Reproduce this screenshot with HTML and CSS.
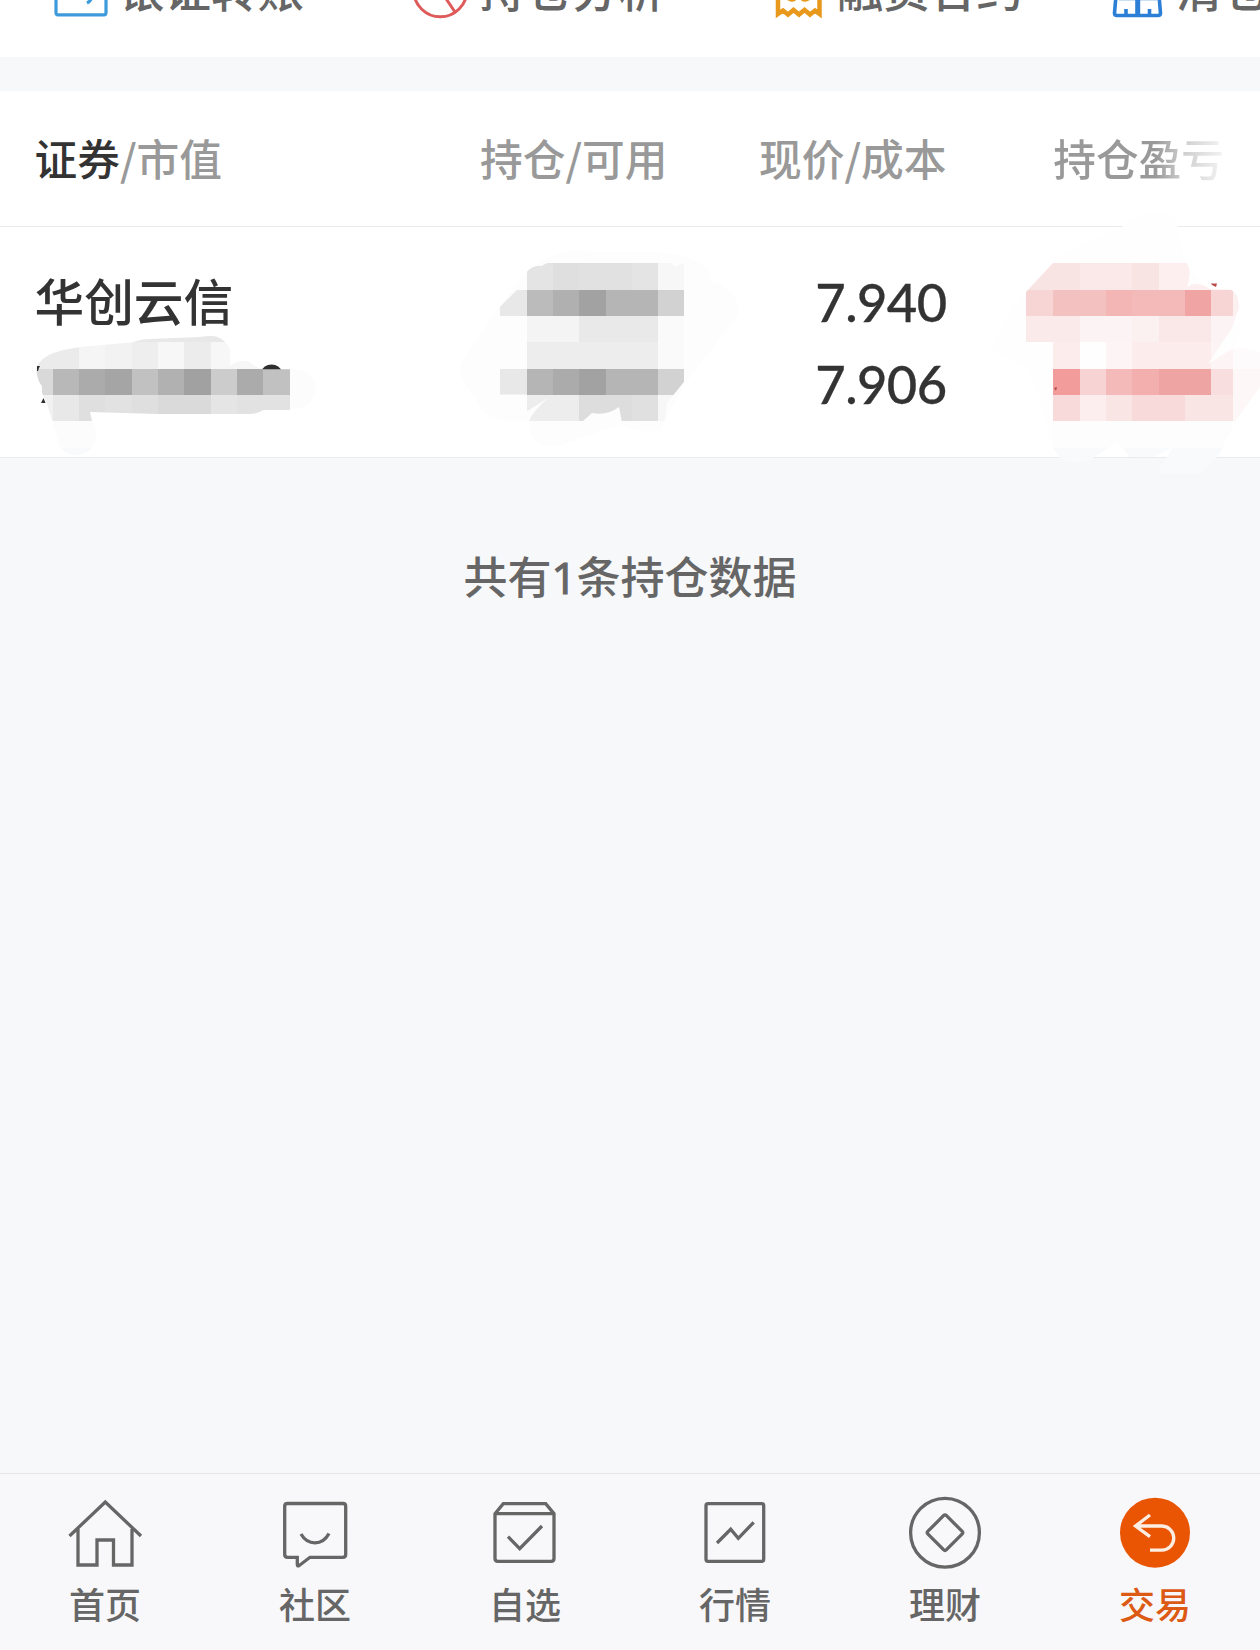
FILE: index.html
```
<!DOCTYPE html>
<html lang="zh-CN">
  <head>
    <meta charset="utf-8">
    <title>持仓</title>
    <meta name="viewport" content="width=device-width">
    <link rel="stylesheet" href="styles.css">
  </head>
  <body>
    <div class="page">
      <!-- shortcuts, scrolled half out of view -->
      <div class="shortcuts">
        <a class="shortcut">
          <svg class="shortcut-icon" viewBox="-3 0 54 54" fill="none" stroke="#3d9bdc" stroke-width="3.200">
            <rect x="-1" y="4" width="50" height="46.8" rx="2"/>
            <path d="M14 27h21l-8 -8M35 33q-1 4 -5 6"/>
          </svg>
          <span>银证转账</span>
        </a>
        <a class="shortcut">
          <svg class="shortcut-icon" viewBox="2 0 54 54" fill="none" stroke="#df5a5a" stroke-width="3">
            <circle cx="27.3" cy="26.2" r="26.6"/>
            <path d="M27.3 -0.4V26.2L42 48"/>
          </svg>
          <span>持仓分析</span>
        </a>
        <a class="shortcut">
          <svg class="shortcut-icon" viewBox="1 0 54 54" fill="none" stroke="#e8991c" stroke-width="4.500">
            <path d="M6 50V4h41.500v46l-4.500 -3.500 -5 4 -5.500 -4.500 -5.500 4.500 -5.500 -4.500 -5.500 4.500 -5 -4z"/>
            <path d="M15 33.500q4 4 8 1.500M38 33.500q-4 4 -8 1.500" stroke-width="3.500"/>
          </svg>
          <span>融资合约</span>
        </a>
        <a class="shortcut">
          <svg class="shortcut-icon" viewBox="1 0 54 54" fill="none" stroke="#2b7fd6" stroke-width="3.600">
            <path d="M6 20L3.500 49q0 2.500 2.500 2.500h41q2.500 0 2.500 -2.500L47 20"/>
            <path d="M8 34.500h38M15 45v6M38.500 45v6"/>
            <path d="M26.700 34v17" stroke-width="5"/>
          </svg>
          <span>清仓股票</span>
        </a>
      </div>

      <div class="holdings">
        <div class="row head">
          <div class="c1"><b>证券</b>/市值</div>
          <div class="c2">持仓/可用</div>
          <div class="c3">现价/成本</div>
          <div class="c4"><span class="fade">持仓盈亏</span></div>
        </div>
        <div class="row stock">
          <div class="c1 name">华创云信</div>
          <div class="c2"></div>
          <div class="c3 price">
            <div>7.940</div>
            <div>7.906</div>
          </div>
          <div class="c4"></div>

          <!-- private values are covered with mosaic, one unit = one tile -->
          <svg class="mosaic" viewBox="0 200 1260 290">
            <defs>
              <clipPath id="m1"><path d="M36.700 373Q36 365 40 362Q44 357 53 353Q66 349 80 347L133 342.300Q142 339 150 339L200 337Q206 335.500 212 336Q220 336.500 225 342Q230 347 230 353L230 366Q236 361 243 361Q250 361 257 367L263 369.300H296Q315 372 315 388Q314 406 298 408L289 410H263Q258 414 250 414H157L90 412L92 421Q96 426 96 435Q95 455 75 455Q65 454 60 447L52 420L46.700 403L42 393V386Q38 382 36.700 373Z"/></clipPath>
              <clipPath id="m2"><path d="M500 306.700L518 289Q523 282 526 272.700Q532 265 542 265.700L547 263H672L675 267L684 263V381.700L667 403Q666 415 664 421H621.700L619 407Q607 416 592 413L583 421H529Q533 411 548 398L526 412V394.500H500Z"/></clipPath>
              <clipPath id="m3"><path d="M1026 292L1053 263H1187Q1192 272 1187 287Q1197 280 1210 289H1227Q1239 290 1239 308L1232 328L1208 364L1227 352Q1240 344 1260 352V387L1235 422L1220 453L1202 473H1157L1173 447L1153 457H1130L1117 442L1093 458Q1075 468 1060 458L1052 447V342H1026Z"/></clipPath>
            </defs>
            <ellipse fill="#2f2f2f" cx="271.500" cy="371" rx="9.500" ry="6.500"/>
            <g clip-path="url(#m1)"><g transform="scale(26.330)" shape-rendering="crispEdges">
              <path fill="#e8e8e8" d="M5 12h4v1h-4z"/>
              <path fill="#ebebeb" d="M1 13h2v1h-2z"/>
              <path fill="#f5f5f5" d="M3 13h1v1h-1z"/>
              <path fill="#f2f2f2" d="M4 13h1v1h-1z"/>
              <path fill="#eeeeee" d="M5 13h1v1h-1z"/>
              <path fill="#f7f7f7" d="M6 13h1v1h-1zM8 13h3v1h-3z"/>
              <path fill="#ececec" d="M7 13h1v1h-1z"/>
              <path fill="#d9d9d9" d="M1 14h1v1h-1z"/>
              <path fill="#b8b8b8" d="M2 14h1v1h-1z"/>
              <path fill="#ababab" d="M3 14h1v1h-1zM9 14h1v1h-1z"/>
              <path fill="#a5a5a5" d="M4 14h1v1h-1z"/>
              <path fill="#c1c1c1" d="M5 14h1v1h-1zM10 14h1v1h-1z"/>
              <path fill="#b1b1b1" d="M6 14h1v1h-1z"/>
              <path fill="#a1a1a1" d="M7 14h1v1h-1z"/>
              <path fill="#cccccc" d="M8 14h1v1h-1z"/>
              <path fill="#fcfcfc" d="M11 14h1v2h-1zM2 16h2v1h-2z"/>
              <path fill="#f1f1f1" d="M1 15h1v1h-1z"/>
              <path fill="#e8e8e8" d="M2 15h1v1h-1z"/>
              <path fill="#dfdfdf" d="M3 15h1v1h-1zM5 15h1v1h-1z"/>
              <path fill="#e2e2e2" d="M4 15h1v1h-1zM9 15h2v1h-2z"/>
              <path fill="#dadada" d="M6 15h2v1h-2z"/>
              <path fill="#e5e5e5" d="M8 15h1v1h-1z"/>
              <path fill="#f9fafc" d="M2 17h2v1h-2z"/>
            </g></g>
            <path fill="#2f2f2f" d="M37 366h3l-1 2 -1 3h-1zM41 403l2.500 -5 2 5z"/>

            <path fill="#fdfdfd" d="M460 365L500 306L526 272Q560 245 590 252L650 252Q710 255 712 282Q740 290 738 315L684 385L660 430Q640 435 620 424L560 446Q530 450 528 420Q480 425 475 395Q460 385 460 365Z"/>
            <g clip-path="url(#m2)"><g transform="scale(26.330)" shape-rendering="crispEdges">
              <path fill="#e4e4e4" d="M20 10h1v1h-1zM24 10h1v1h-1z"/>
              <path fill="#dfdfdf" d="M21 10h1v1h-1z"/>
              <path fill="#e1e1e1" d="M22 10h2v1h-2z"/>
              <path fill="#f7f7f7" d="M25 10h1v1h-1zM25 15h1v1h-1z"/>
              <path fill="#e8e8e8" d="M19 11h1v1h-1zM19 14h1v1h-1z"/>
              <path fill="#bbbbbb" d="M20 11h1v1h-1z"/>
              <path fill="#b0b0b0" d="M21 11h1v1h-1z"/>
              <path fill="#a2a2a2" d="M22 11h1v1h-1zM22 14h1v1h-1z"/>
              <path fill="#b5b5b5" d="M23 11h2v1h-2zM23 14h2v1h-2zM20 14h1v1h-1z"/>
              <path fill="#d2d2d2" d="M25 11h1v1h-1zM25 14h1v1h-1z"/>
              <path fill="#f4f4f4" d="M20 12h2v1h-2z"/>
              <path fill="#e9e9e9" d="M22 12h3v1h-3z"/>
              <path fill="#fafafa" d="M25 12h1v2h-1z"/>
              <path fill="#ededed" d="M20 13h5v1h-5z"/>
              <path fill="#ababab" d="M21 14h1v1h-1z"/>
              <path fill="#ededed" d="M20 15h2v1h-2z"/>
              <path fill="#dddddd" d="M22 15h2v1h-2z"/>
              <path fill="#e0e0e0" d="M24 15h1v1h-1z"/>
            </g></g>

            <path fill="#fefefe" d="M992 350Q1000 320 1026 290L1060 255 1122 227Q1140 212 1160 213Q1178 214 1179 235L1185 263 1240 330 1210 440 1052 445 1040 400 1030 370Z"/>
            <g clip-path="url(#m3)"><g transform="scale(26.330)" shape-rendering="crispEdges">
              <path fill="#f9e4e4" d="M38 10h3v1h-3zM43 10h1v1h-1z"/>
              <path fill="#fbe8e8" d="M41 10h2v1h-2z"/>
              <path fill="#fdefef" d="M44 10h2v1h-2z"/>
              <path fill="#fdf7f7" d="M46 10h2v1h-2z"/>
              <path fill="#f8d5d5" d="M38 11h2v1h-2zM46 11h.82v1h-.82z"/>
              <path fill="#f4c1c1" d="M40 11h2v1h-2z"/>
              <path fill="#f4b5b5" d="M42 11h1v1h-1z"/>
              <path fill="#f4b9b9" d="M43 11h2v1h-2z"/>
              <path fill="#f1a4a4" d="M45 11h1v1h-1z"/>
              <path fill="#fdf0f0" d="M46.820 11h1.200v1h-1.200z"/>
              <path fill="#fbeaea" d="M38 12h3v1h-3z"/>
              <path fill="#fcf4f4" d="M41 12h2v1h-2zM46 12h1v1h-1z"/>
              <path fill="#fbf1f0" d="M43 12h1v1h-1z"/>
              <path fill="#fae8e8" d="M44 12h2v1h-2z"/>
              <path fill="#fcecec" d="M40 13h1v1h-1zM43 13h3v1h-3z"/>
              <path fill="#fefefe" d="M41 13h1v1h-1z"/>
              <path fill="#fdf5f5" d="M42 13h1v1h-1zM46 13h.82v1h-.82z"/>
              <path fill="#fdfbfb" d="M46.820 13h1.200v1h-1.200z"/>
              <path fill="#f29c9c" d="M40 14h1v1h-1z"/>
              <path fill="#f8d3d3" d="M41 14h1v1h-1z"/>
              <path fill="#f4b9b9" d="M42 14h1v1h-1z"/>
              <path fill="#f3aeae" d="M43 14h1v1h-1z"/>
              <path fill="#efa4a4" d="M44 14h2v1h-2z"/>
              <path fill="#f8dede" d="M46 14h.82v1h-.82z"/>
              <path fill="#fdf8f7" d="M46.820 14h1.200v2h-1.200z"/>
              <path fill="#f8dada" d="M40 15h1v1h-1zM43 15h2v1h-2z"/>
              <path fill="#fceeee" d="M41 15h1v1h-1z"/>
              <path fill="#fae5e5" d="M42 15h1v1h-1zM45 15h1.820v1h-1.820z"/>
              <path fill="#fdfdfd" d="M40 16h8v1h-8z"/>
              <path fill="#f9fafb" d="M40 17h8v1h-8z"/>
            </g></g>
            <path fill="#b94a4a" d="M1211 283.500h6l-1 3.500 -4 -2zM1054 388l3 -1 -1 4z"/>
          </svg>
        </div>
      </div>

      <p class="total">共有<span class="num">1</span>条持仓数据</p>

      <nav class="tabs">
        <a class="tab">
          <svg class="tab-icon" viewBox="0 0 80 80">
            <path d="M4.500 43L40.300 9 76 43M13 36v36h19V47h16.500v25H67V36"/>
          </svg>
          <span>首页</span>
        </a>
        <a class="tab">
          <svg class="tab-icon" viewBox="0 0 80 80">
            <path d="M12.500 10.500H67.900q2.800 0 2.800 2.800V61.500q0 2.800 -2.800 2.800H35L24 72.700q-1.700 .8 -1.700 -1V64.300H12.500q-2.800 0 -2.800 -2.800V13.300q0 -2.800 2.800 -2.800zM26 41Q31 49.800 40 49.800T54 40.500"/>
          </svg>
          <span>社区</span>
        </a>
        <a class="tab">
          <svg class="tab-icon" viewBox="0 0 80 80">
            <path d="M10 20.700L18.300 10.700H60.700L69 20.700V65.500q0 2.800 -2.800 2.800H12.800q-2.800 0 -2.800 -2.800zH69M23 43.700l11.700 12L57 33"/>
          </svg>
          <span>自选</span>
        </a>
        <a class="tab">
          <svg class="tab-icon" viewBox="0 0 80 80">
            <rect x="11" y="10.700" width="57.700" height="57.600" rx="2"/>
            <path d="M22 50l13.700 -13.700 7.600 9L58.700 29.300"/>
          </svg>
          <span>行情</span>
        </a>
        <a class="tab">
          <svg class="tab-icon" viewBox="0 0 80 80">
            <circle cx="40" cy="39.700" r="34.400"/>
            <path stroke-linejoin="round" d="M38.500 22.700q1.500 -1.500 3 0l15.500 15.500q1.500 1.500 0 3L41.500 56.700q-1.500 1.500 -3 0L23 41.200q-1.500 -1.500 0 -3z"/>
          </svg>
          <span>理财</span>
        </a>
        <a class="tab active">
          <svg class="tab-icon" viewBox="0 0 80 80">
            <circle cx="40" cy="39.700" r="35"/>
            <path d="M35 22L20.500 33 35 43.700M20.500 33H46.700a12.100 12.100 0 0 1 0 24.200H35"/>
          </svg>
          <span>交易</span>
        </a>
      </nav>
    </div>
  </body>
</html>
```
FILE: styles.css
```
body {
  margin: 0;
  background-color: #f7f8fa;
  font-family: "Noto Sans CJK SC", sans-serif;
  font-weight: 500;
  color: #666;
}

.page {
  display: flex;
  flex-direction: column;
  height: 1650px;
  overflow: hidden;
}

/* shortcuts */
.shortcuts {
  display: grid;
  grid-template-columns: 361px 358px 339px 260px;
  flex: none;
  align-items: center;
  height: 133px;
  margin-top: -76px;
  padding-left: 54px;
  background-color: #fff;
}

.shortcut {
  display: flex;
  align-items: center;
  gap: 10px;
  font-size: 46.5px;
  line-height: 60px;
  white-space: nowrap;
}

.shortcut span {
  margin-top: -8px;
}

.shortcut-icon {
  width: 54px;
  height: 54px;
  flex: none;
  overflow: visible;
}

/* holdings table */
.holdings {
  flex: none;
  margin-top: 34px;
  background-color: #fff;
}

.row {
  display: grid;
  grid-template-columns: 366px 267px 279px 1fr;
  padding: 0 36px 0 34.5px;
  box-sizing: border-box;
  border-bottom: 1px solid #ebebeb;
}

.c2,
.c3,
.c4 {
  text-align: right;
}

.head {
  height: 136px;
  align-items: center;
  padding-bottom: 3px;
  font-size: 42.7px;
  line-height: 60px;
  color: #999;
}

.head b {
  font-weight: 500;
  color: #333;
}

.fade {
  background: linear-gradient(90deg, #999 60%, #ccc 75%, #f4f4f4 100%);
  -webkit-background-clip: text;
  background-clip: text;
  color: transparent;
}

.stock {
  position: relative;
  height: 231px;
  color: #333;
}

.name {
  padding-top: 35px;
  font-size: 49.7px;
  line-height: 74px;
}

.price {
  padding-top: 34px;
  font-family: Lato, "Noto Sans", sans-serif;
  font-size: 52.5px;
  line-height: 82px;
  letter-spacing: -0.6px;
  -webkit-text-stroke: 0.3px #333;
}

/* lies over the stock row and a little beyond it */
.mosaic {
  position: absolute;
  top: -27px;
  left: 0;
  width: 1260px;
  height: 290px;
}

.total {
  margin: 81px 0 0;
  font-size: 44px;
  line-height: 72px;
  text-align: center;
}

.num {
  font-family: "Open Sans", sans-serif;
  font-weight: 500;
  line-height: 1;
  -webkit-text-stroke: 1.2px #666;
}

/* bottom tabs */
.tabs {
  display: flex;
  flex: none;
  height: 176px;
  margin-top: auto;
  border-top: 1px solid #e4e5e7;
  background-color: #f8f8fa;
}

.tab {
  display: flex;
  flex: 1;
  flex-direction: column;
  align-items: center;
  padding-top: 19px;
  font-size: 36px;
  line-height: 52px;
}

.tab-icon {
  width: 80px;
  height: 80px;
  margin-bottom: 4px;
  fill: none;
  stroke: #666;
  stroke-width: 3.3;
}

.active {
  color: #dc5a14;
}

.active circle {
  fill: #ea5504;
  stroke: none;
}

.active path {
  stroke: #fdeee4;
}
```
